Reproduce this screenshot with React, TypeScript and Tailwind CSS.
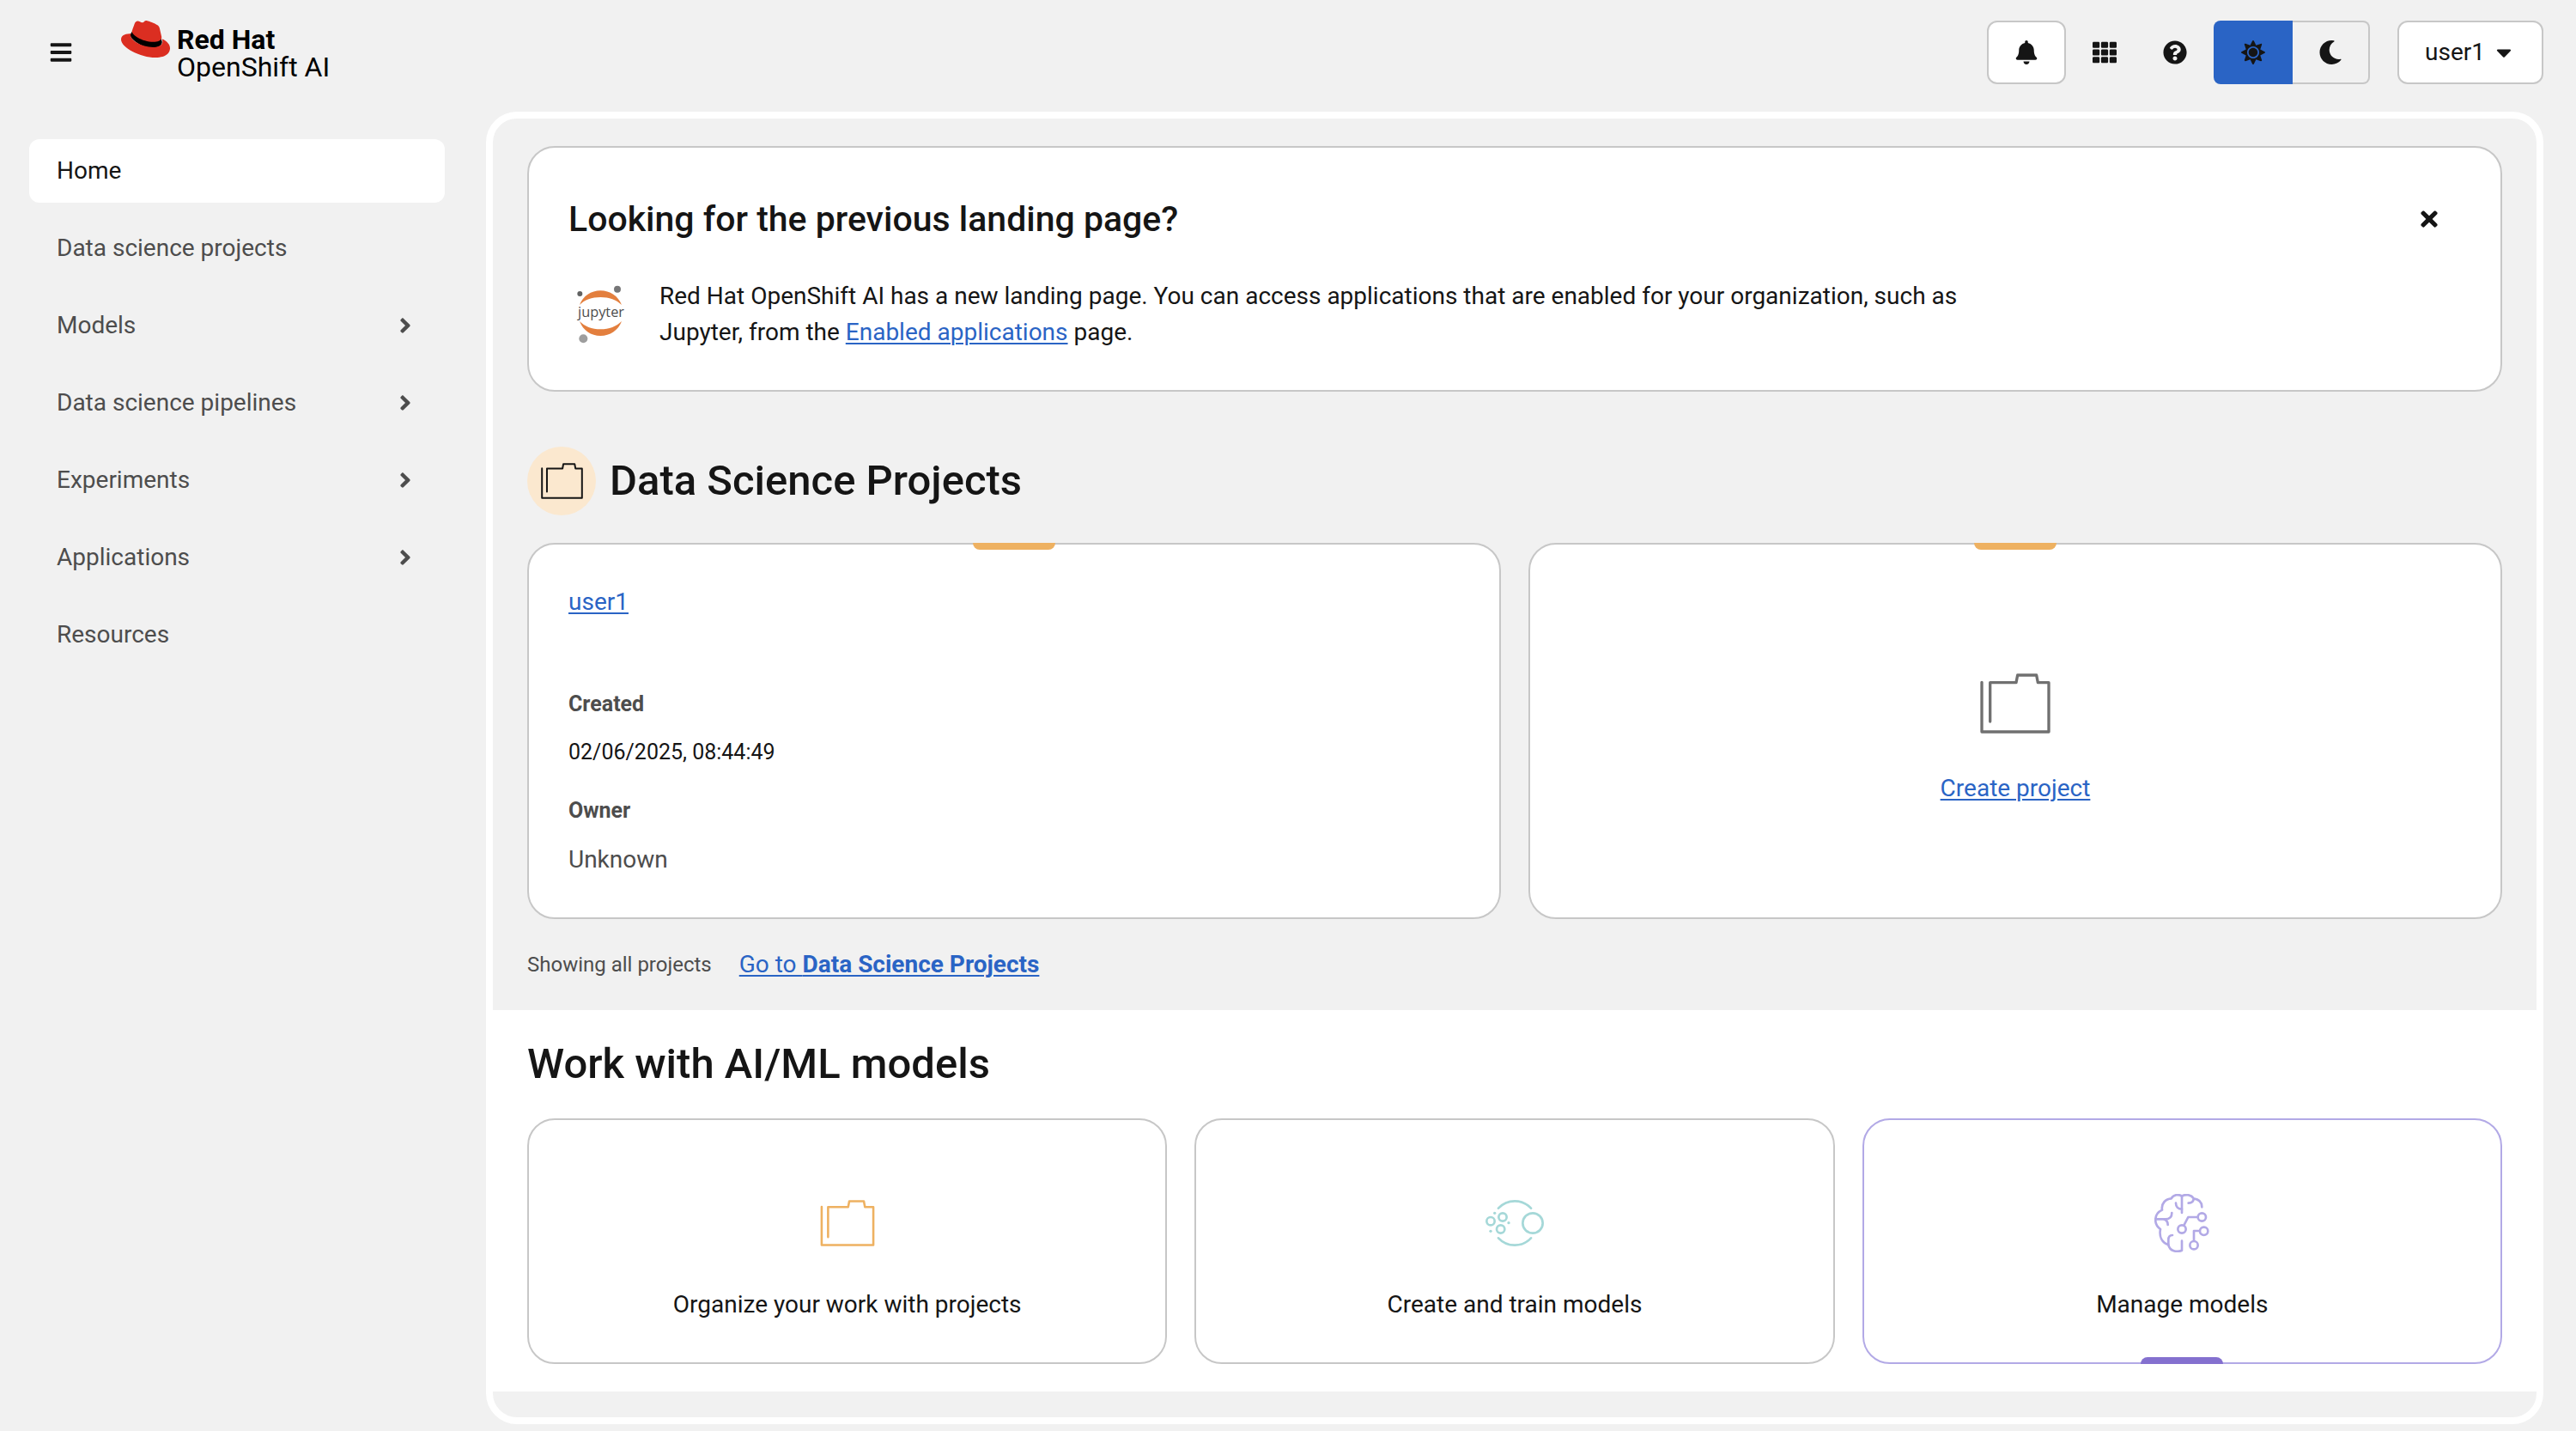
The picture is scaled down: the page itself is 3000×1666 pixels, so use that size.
import React from "react";
import type { ReactNode } from "react";
import { SiRedhat } from "react-icons/si";
import {
  FaAngleRight,
  FaBars,
  FaBell,
  FaCaretDown,
  FaMoon,
  FaQuestionCircle,
  FaSun,
  FaTh,
  FaTimes,
} from "react-icons/fa";

const NAV_ITEMS = [
  { label: "Home", active: true, expandable: false },
  { label: "Data science projects", active: false, expandable: false },
  { label: "Models", active: false, expandable: true },
  { label: "Data science pipelines", active: false, expandable: true },
  { label: "Experiments", active: false, expandable: true },
  { label: "Applications", active: false, expandable: true },
  { label: "Resources", active: false, expandable: false },
];

function RedHatLogo() {
  return (
    <svg viewBox="0 0 24 24" className="mt-[17px] h-[57px] w-[57px] text-[#db2e21]" aria-hidden="true">
      <path
        d="M5.3 8.4 4.6 9.6C4.3 10.4 4.8 11.4 5.9 12.3 8.3 14.6 12.2 16.4 15.6 16.4 18.4 16.4 20.1 15 20.1 13.4L19.6 11.6Z"
        fill="#000"
      />
      <SiRedhat size={24} />
    </svg>
  );
}

function JupyterLogo() {
  return (
    <svg viewBox="66 60 216 216" className="h-[72px] w-[72px] shrink-0" role="img" aria-label="Jupyter">
      <path d="M105 135C117 104 145 85 178 85s62 19 74 50c-18-18-44-27-74-27s-56 9-73 27Z" fill="#e37f3e" />
      <path d="M105 192c12 32 40 51 73 51s62-19 74-51c-18 18-44 28-74 28s-56-10-73-28Z" fill="#e37f3e" />
      <circle cx="106" cy="96" r="9" fill="#616262" />
      <circle cx="237" cy="80" r="12" fill="#767677" />
      <circle cx="118" cy="253" r="15" fill="#9e9e9e" />
      <text x="180" y="178" textAnchor="middle" fontSize="49" fontFamily="Open Sans, sans-serif" fill="#4e4e4e">
        jupyter
      </text>
    </svg>
  );
}

function ProjectIcon({ className }: { className: string }) {
  return (
    <svg viewBox="438 129 246 210" fill="none" stroke="currentColor" strokeWidth="10" className={className} aria-hidden="true">
      <path
        d="M444 160v173h234V161h-38l-5-26h-66l-5 26h-91v136"
        strokeLinecap="round"
        strokeLinejoin="round"
      />
    </svg>
  );
}

function TrainIcon() {
  return (
    <svg viewBox="450 111 204 162" fill="none" stroke="currentColor" strokeWidth="8" strokeLinecap="round" className="h-[54px] w-[68px] text-[#a5d8d8]" aria-hidden="true">
      <path d="M495 140c15-16 35-25 57-25s42 9 57 25M495 244c15 16 35 25 57 25s42-9 57-25" />
      <circle cx="615" cy="192" r="35" />
      <circle cx="468" cy="185" r="14" />
      <circle cx="510" cy="171" r="14" />
      <circle cx="503" cy="213" r="14" />
      <g fill="currentColor" stroke="none">
        <circle cx="482" cy="157" r="5" />
        <circle cx="531" cy="191" r="5" />
        <circle cx="468" cy="220" r="5" />
      </g>
    </svg>
  );
}

function ModelIcon() {
  return (
    <svg viewBox="327 90 192 204" fill="none" stroke="currentColor" strokeWidth="8" strokeLinecap="round" strokeLinejoin="round" className="h-[68px] w-[64px] text-[#b2a9e6]" aria-hidden="true">
      <path d="M423 156V98C412 90 393 92 386 106 367 107 350 123 354 146 324 160 324 196 348 213 343 239 353 260 376 268 381 290 405 295 423 287V254" />
      <path d="M376 268V250C376 240 381 234 390 234" />
      <path d="M332 178H366C380 178 388 170 388 156M358 178C369 180 374 188 374 198" />
      <path d="M402 122C402 135 410 143 423 143" />
      <path d="M423 98C435 90 456 92 464 106 482 108 493 118 493 136M464 106C464 116 457 122 446 122" />
      <path d="M477 171H445L430 200M485 219H465V254" />
      <circle cx="493" cy="171" r="14" />
      <circle cx="423" cy="213" r="14" />
      <circle cx="500" cy="220" r="14" />
      <circle cx="465" cy="269" r="14" />
    </svg>
  );
}

function TopTab() {
  return (
    <span className="absolute -top-[2px] left-1/2 h-2 w-24 -translate-x-1/2 rounded-b-lg bg-[#eeb161]" />
  );
}

function ModelCard({ icon, label, selected }: { icon: ReactNode; label: string; selected?: boolean }) {
  return (
    <button
      type="button"
      className={
        selected
          ? "relative flex flex-1 flex-col items-center gap-[38px] rounded-[32px] border-2 border-[#b2a9e6] bg-white pt-[84px] pb-[46px]"
          : "relative flex flex-1 flex-col items-center gap-[38px] rounded-[32px] border-2 border-[#c7c7c7] bg-white pt-[84px] pb-[46px]"
      }
    >
      <span className="flex h-[72px] items-center">{icon}</span>
      <span>{label}</span>
      {selected && (
        <span className="absolute -bottom-[2px] left-1/2 h-2 w-24 -translate-x-1/2 rounded-t-lg bg-[#8470cf]" />
      )}
    </button>
  );
}

function Header() {
  return (
    <header className="flex h-[130px] items-start pr-[38px] pl-[34px]">
      <button type="button" aria-label="Toggle navigation" className="mt-6 flex h-[74px] w-[74px] items-center justify-center">
        <FaBars size={28} />
      </button>
      <a href="#home" className="ml-[33px] flex items-start gap-2 text-black">
        <RedHatLogo />
        <span className="pt-[30px] text-[32px] leading-[32px]">
          <span className="block font-bold">Red Hat</span>
          <span className="block">OpenShift AI</span>
        </span>
      </a>
      <div className="mt-6 ml-auto flex h-[74px] items-stretch">
        <button type="button" aria-label="Notifications" className="flex w-[92px] items-center justify-center rounded-xl border-2 border-[#c7c7c7] bg-white">
          <FaBell size={28} />
        </button>
        <button type="button" aria-label="Applications" className="ml-1 flex w-[82px] items-center justify-center">
          <FaTh size={28} />
        </button>
        <button type="button" aria-label="Help" className="flex w-[82px] items-center justify-center">
          <FaQuestionCircle size={28} />
        </button>
        <div className="ml-1 flex" role="group" aria-label="Theme">
          <button type="button" aria-label="Light theme" aria-pressed="true" className="flex w-[92px] items-center justify-center rounded-l-lg bg-[#2a64c5]">
            <FaSun size={28} />
          </button>
          <button type="button" aria-label="Dark theme" aria-pressed="false" className="flex w-[90px] items-center justify-center rounded-r-lg border-2 border-l-0 border-[#c7c7c7]">
            <FaMoon size={28} />
          </button>
        </div>
        <button type="button" className="ml-8 flex w-[170px] items-center justify-center gap-2 rounded-xl border-2 border-[#c7c7c7] bg-white">
          user1
          <FaCaretDown size={28} />
        </button>
      </div>
    </header>
  );
}

function Sidebar() {
  return (
    <nav aria-label="Main" className="w-[566px] shrink-0 pt-8 pr-12 pl-[34px]">
      <ul className="flex flex-col gap-4">
        {NAV_ITEMS.map((item) => (
          <li key={item.label}>
            <a
              href="#nav"
              aria-current={item.active ? "page" : undefined}
              className={
                item.active
                  ? "flex h-[74px] items-center justify-between rounded-xl bg-white px-8"
                  : "flex h-[74px] items-center justify-between rounded-xl px-8 text-[#4d4d4d]"
              }
            >
              {item.label}
              {item.expandable && <FaAngleRight size={28} />}
            </a>
          </li>
        ))}
      </ul>
    </nav>
  );
}

const LINK = "text-[#2a64c5] underline decoration-2 underline-offset-[3px]";

export default function App() {
  return (
    <div className="flex min-h-screen flex-col bg-[#f1f1f1] font-[Roboto,sans-serif] text-[28px] leading-[42px] text-[#151515]">
      <Header />
      <div className="flex flex-1">
        <Sidebar />
        <main className="mr-[38px] mb-2 flex-1 rounded-[36px] border-8 border-white">
          <section className="px-10 py-8">
            <div className="rounded-[32px] border-2 border-[#c7c7c7] bg-white p-[46px]">
              <div className="flex h-[74px] items-center justify-between">
                <h2 className="text-[41px] font-medium">Looking for the previous landing page?</h2>
                <button type="button" aria-label="Close" className="flex h-[74px] w-[74px] items-center justify-center">
                  <FaTimes size={28} />
                </button>
              </div>
              <div className="mt-8 flex items-center gap-[34px]">
                <JupyterLogo />
                <p className="max-w-[1540px]">
                  Red Hat OpenShift AI has a new landing page. You can access applications that are enabled for your
                  organization, such as Jupyter, from the{" "}
                  <a href="#enabled" className={LINK}>
                    Enabled applications
                  </a>{" "}
                  page.
                </p>
              </div>
            </div>

            <div className="mt-16 flex items-center gap-4">
              <span className="flex h-20 w-20 items-center justify-center rounded-full bg-[#fbe8cf]">
                <ProjectIcon className="h-[42px] w-[49px]" />
              </span>
              <h1 className="text-[49px] leading-[62px] font-medium">Data Science Projects</h1>
            </div>

            <div className="mt-8 grid grid-cols-2 gap-8">
              <article className="relative rounded-[32px] border-2 border-[#c7c7c7] bg-white p-[46px]">
                <TopTab />
                <a href="#user1" className={LINK}>
                  user1
                </a>
                <dl className="mt-20">
                  <dt className="text-[25px] leading-9 font-bold text-[#4d4d4d]">Created</dt>
                  <dd className="mt-5 text-[25px] leading-9">02/06/2025, 08:44:49</dd>
                  <dt className="mt-8 text-[25px] leading-9 font-bold text-[#4d4d4d]">Owner</dt>
                  <dd className="mt-[18px] text-[#4d4d4d]">Unknown</dd>
                </dl>
              </article>
              <article className="relative flex flex-col items-center justify-center gap-[43px] rounded-[32px] border-2 border-[#c7c7c7] bg-white pt-5">
                <TopTab />
                <ProjectIcon className="h-[70px] w-[82px] text-[#707070]" />
                <a href="#create" className={LINK}>
                  Create project
                </a>
              </article>
            </div>

            <div className="mt-8 flex items-center gap-8">
              <span className="text-2xl text-[#4d4d4d]">Showing all projects</span>
              <a href="#projects" className={LINK}>
                Go to <b>Data Science Projects</b>
              </a>
            </div>
          </section>

          <section className="bg-white px-10 py-8">
            <h1 className="text-[49px] leading-[62px] font-medium">Work with AI/ML models</h1>
            <div className="mt-8 flex gap-8">
              <ModelCard icon={<ProjectIcon className="h-[54px] w-[64px] text-[#eeb161]" />} label="Organize your work with projects" />
              <ModelCard icon={<TrainIcon />} label="Create and train models" />
              <ModelCard icon={<ModelIcon />} label="Manage models" selected />
            </div>
          </section>
        </main>
      </div>
    </div>
  );
}
